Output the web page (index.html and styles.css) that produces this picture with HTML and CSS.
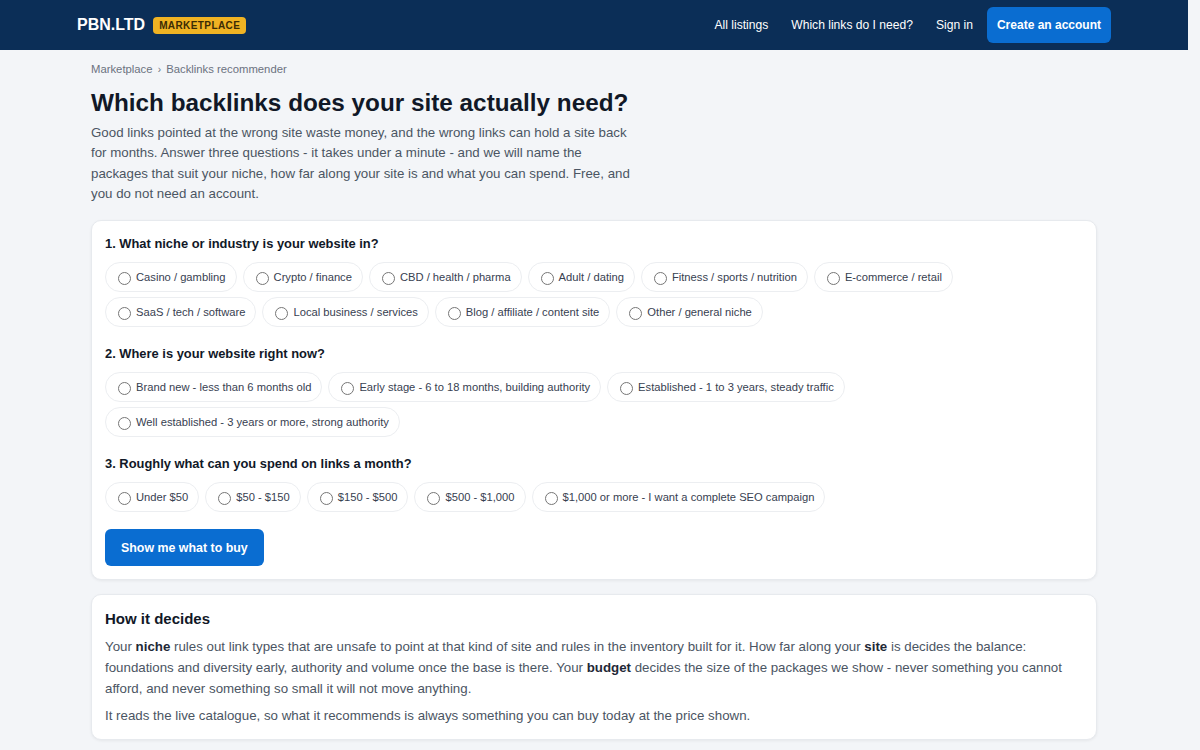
FILE: index.html
```html
<!DOCTYPE html>
<html lang="en">
<head>
    <meta charset="UTF-8">
    <meta name="viewport" content="width=device-width, initial-scale=1.0">
    <title>Which backlinks does your site need? - PBN.LTD</title>
    <link rel="stylesheet" href="styles.css">
</head>
<body>
    <header class="topbar">
        <div class="topbar-inner">
            <a class="brand" href="#">PBN.LTD <span class="badge">MARKETPLACE</span></a>
            <nav class="nav">
                <a href="#">All listings</a>
                <a href="#">Which links do I need?</a>
                <a href="#">Sign in</a>
                <a href="#" class="btn-primary">Create an account</a>
            </nav>
        </div>
    </header>

    <main class="page">
        <div class="crumbs"><a href="#">Marketplace</a> <span class="sep">&rsaquo;</span> <span>Backlinks recommender</span></div>
        <h1>Which backlinks does your site actually need?</h1>
        <p class="lead">Good links pointed at the wrong site waste money, and the wrong links can hold a site back for months. Answer three questions - it takes under a minute - and we will name the packages that suit your niche, how far along your site is and what you can spend. Free, and you do not need an account.</p>

        <form class="card quiz">
            <div class="question">
                <h3>1. What niche or industry is your website in?</h3>
                <div class="options">
                    <label class="pill"><input type="radio" name="niche"> Casino / gambling</label>
                    <label class="pill"><input type="radio" name="niche"> Crypto / finance</label>
                    <label class="pill"><input type="radio" name="niche"> CBD / health / pharma</label>
                    <label class="pill"><input type="radio" name="niche"> Adult / dating</label>
                    <label class="pill"><input type="radio" name="niche"> Fitness / sports / nutrition</label>
                    <label class="pill"><input type="radio" name="niche"> E-commerce / retail</label>
                    <label class="pill"><input type="radio" name="niche"> SaaS / tech / software</label>
                    <label class="pill"><input type="radio" name="niche"> Local business / services</label>
                    <label class="pill"><input type="radio" name="niche"> Blog / affiliate / content site</label>
                    <label class="pill"><input type="radio" name="niche"> Other / general niche</label>
                </div>
            </div>

            <div class="question">
                <h3>2. Where is your website right now?</h3>
                <div class="options">
                    <label class="pill"><input type="radio" name="stage"> Brand new - less than 6 months old</label>
                    <label class="pill"><input type="radio" name="stage"> Early stage - 6 to 18 months, building authority</label>
                    <label class="pill"><input type="radio" name="stage"> Established - 1 to 3 years, steady traffic</label>
                    <label class="pill"><input type="radio" name="stage"> Well established - 3 years or more, strong authority</label>
                </div>
            </div>

            <div class="question">
                <h3>3. Roughly what can you spend on links a month?</h3>
                <div class="options">
                    <label class="pill"><input type="radio" name="budget"> Under $50</label>
                    <label class="pill"><input type="radio" name="budget"> $50 - $150</label>
                    <label class="pill"><input type="radio" name="budget"> $150 - $500</label>
                    <label class="pill"><input type="radio" name="budget"> $500 - $1,000</label>
                    <label class="pill"><input type="radio" name="budget"> $1,000 or more - I want a complete SEO campaign</label>
                </div>
            </div>

            <button type="button" class="btn-primary btn-submit">Show me what to buy</button>
        </form>

        <section class="card explain">
            <h2>How it decides</h2>
            <p>Your <strong>niche</strong> rules out link types that are unsafe to point at that kind of site and rules in the inventory built for it. How far along your <strong>site</strong> is decides the balance: foundations and diversity early, authority and volume once the base is there. Your <strong>budget</strong> decides the size of the packages we show - never something you cannot afford, and never something so small it will not move anything.</p>
            <p>It reads the live catalogue, so what it recommends is always something you can buy today at the price shown.</p>
        </section>
    </main>
</body>
</html>
```

FILE: styles.css
```css
body {
    margin: 0;
    padding-right: 12px;
    font-family: "Liberation Sans", Arial, sans-serif;
    background-color: #f3f5f8;
    color: #1f2937;
}
a {
    color: inherit;
    text-decoration: none;
}

.topbar {
    background-color: #0b2e57;
    height: 50px;
}
.topbar-inner {
    max-width: 1034px;
    height: 100%;
    margin: 0 auto;
    display: flex;
    align-items: center;
    justify-content: space-between;
}
.brand {
    color: #fff;
    font-weight: bold;
    font-size: 16px;
    display: flex;
    align-items: center;
    gap: 8px;
}
.badge {
    background-color: #f0b323;
    color: #3b2c05;
    font-size: 10px;
    letter-spacing: 0.4px;
    padding: 2px 6px;
    border-radius: 4px;
    line-height: 13px;
}
.nav {
    display: flex;
    align-items: center;
    gap: 7px;
}
.nav a {
    color: #fff;
    font-size: 12.1px;
    padding: 8px;
}
.btn-primary {
    background-color: #0a6dd1;
    color: #fff;
    font-weight: bold;
    border: none;
    border-radius: 6px;
    cursor: pointer;
    font-family: inherit;
}
.nav .btn-primary {
    font-size: 12px;
    padding: 11px 10px;
    line-height: 14px;
    margin-left: -1px;
}

.page {
    max-width: 1006px;
    margin: 0 auto;
    padding: 12px 0 120px;
}
.crumbs {
    font-size: 11.3px;
    color: #6b7280;
    line-height: 14px;
}
.crumbs .sep {
    font-size: 10px;
    margin: 0 2px;
}
h1 {
    font-size: 24.3px;
    color: #111827;
    margin: 11px 0 5px;
    line-height: 30px;
}
.lead {
    font-size: 13.3px;
    line-height: 20.3px;
    color: #4b5563;
    max-width: 548px;
    margin: 0 0 16px;
}

.card {
    background: #fff;
    border: 1px solid #e7eaee;
    border-radius: 10px;
    box-shadow: 0 1px 3px rgba(0,0,0,0.06);
    padding: 14px 13px 13px;
}
.question {
    margin-bottom: 18px;
}
.question h3 {
    font-size: 12.9px;
    line-height: 18px;
    color: #111827;
    margin: 0 0 9px;
}
.options {
    display: flex;
    flex-wrap: wrap;
    gap: 5px 6px;
}
.pill {
    display: inline-flex;
    align-items: center;
    gap: 5px;
    height: 30px;
    box-sizing: border-box;
    padding: 0 10px 0 12px;
    border: 1px solid #eceef1;
    border-radius: 16px;
    font-size: 11.2px;
    color: #374151;
    cursor: pointer;
}
.pill input {
    margin: 2px 0 0;
    width: 13px;
    height: 13px;
}
.btn-submit {
    margin-top: -1px;
    font-size: 12.4px;
    padding: 0 16px;
    height: 37px;
}

.explain {
    margin-top: 14px;
}
.explain h2 {
    font-size: 15px;
    line-height: 20px;
    color: #111827;
    margin: 0 0 7px;
}
.explain p {
    font-size: 13.3px;
    line-height: 21px;
    color: #4b5563;
    margin: 0 0 6px;
}
.explain p:last-child {
    margin-bottom: 0;
}
.explain strong {
    color: #1f2937;
}
```
